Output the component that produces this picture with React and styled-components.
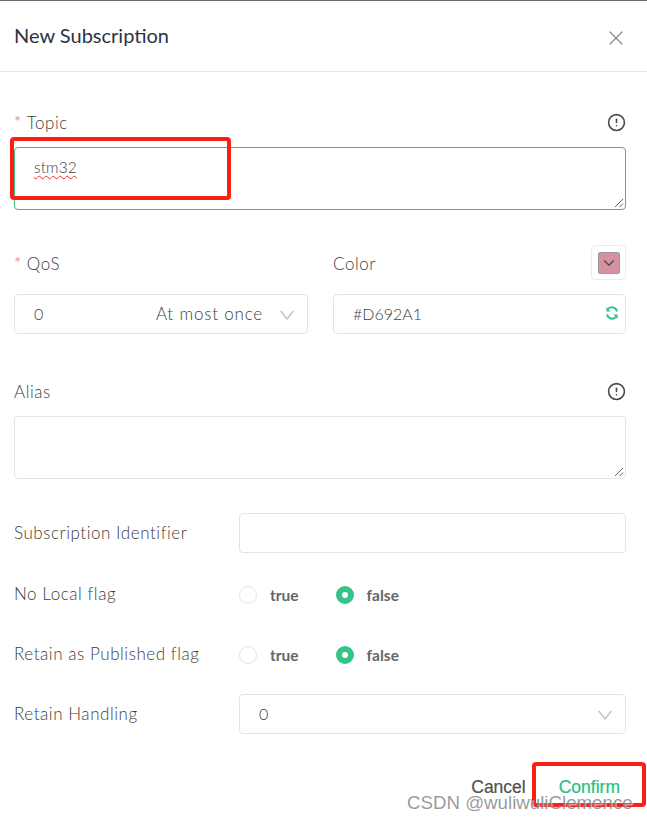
import React from 'react';
import styled, { createGlobalStyle } from 'styled-components';
import { X, ChevronDown, CircleAlert } from 'lucide-react';

const Global = createGlobalStyle`
  html, body { margin: 0; padding: 0; background: #fff; }
  * { box-sizing: border-box; }
`;
const Page = styled.div`
  position: relative; width: 647px; height: 820px; overflow: hidden; background: #fff;
  border-top: 1px solid #6f6f6f;
  font-family: Lato, "Liberation Sans", sans-serif; color: #5b5b5b;
`;
const Header = styled.header`
  height: 71px; padding: 0 19px 0 15px; display: flex; align-items: center; justify-content: space-between;
  border-bottom: 1px solid #e6e6ef;
`;
const Title = styled.h1`
  margin: 0 0 3px -1px; font-size: 20px; font-weight: 400; color: #2c3345;
`;
const CloseIcon = styled(X)`
  width: 24px; height: 24px; color: #85868c; margin-top: 3px;
`;
const Form = styled.div`
  padding: 40px 21px 0 14px; display: flex; flex-direction: column;
`;
const LabelRow = styled.div`
  display: flex; align-items: center; justify-content: space-between; height: 22px; padding: 0 0 2px;
`;
const Label = styled.label`
  font-size: 17px; font-weight: 300; letter-spacing: 0.55px; color: #404040; white-space: nowrap;
`;
const Star = styled.span`
  color: #f56c6c; font-size: 17px; margin-right: 5px;
`;
const Info = styled(CircleAlert)`
  width: 19px; height: 19px; color: #4a4a4a; stroke-width: 2;
`;
const TextBox = styled.div`
  position: relative; height: 63px; margin-top: 13px; padding: 10px 19px;
  border: 1px solid ${p => (p.$focus ? '#42b886' : '#e3e3f0')}; border-radius: 4px;
  font-size: 15.5px; font-weight: 300; letter-spacing: 0.1px; color: #404040;
`;
const Squiggle = styled.span`
  text-decoration: underline wavy #e8302a 1px; text-underline-offset: 2px;
`;
const Grip = styled.svg`
  position: absolute; right: 1px; bottom: 1px; width: 10px; height: 10px;
`;
const TwoCols = styled.div`
  display: grid; grid-template-columns: 294px 293px; column-gap: 25px; margin-top: 35px;
`;
const Col = styled.div`
  display: flex; flex-direction: column;
`;
const ColHead = styled.div`
  height: 35px; display: flex; align-items: center; justify-content: space-between;
  ${Label} { margin-top: 2px; }
`;
const Swatch = styled.div`
  width: 35px; height: 35px; border: 1px solid #eaeaf0; border-radius: 4px; display: flex; align-items: center; justify-content: center;
`;
const SwatchInner = styled.div`
  width: 22px; height: 22px; background: #d692a1; border: 1px solid #9a9a9a; border-radius: 2px;
  display: flex; align-items: center; justify-content: center; color: #4a4a4a;
`;
const Field = styled.div`
  height: 40px; border: 1px solid #e3e3f0; border-radius: 4px; display: flex; align-items: center; justify-content: space-between;
  padding: 0 ${p => p.$pr || 13}px 2px 19px; font-size: 16px; font-weight: 300; color: #404040;
  margin-top: ${p => p.$mt || 0}px;
  flex: ${p => (p.$grow ? 1 : 'none')};
`;
const Value = styled.span`
  flex: 1;
`;
const Hint = styled.span`
  margin-right: 17px; font-size: 17px; letter-spacing: 0.8px;
`;
const ChevronSvg = styled.svg`
  width: 14px; height: 10px; margin-top: 3px; flex: none;
`;
const AliasBlock = styled.div`
  margin-top: 47px;
`;
const Row = styled.div`
  display: flex; align-items: center; height: 40px; margin-top: ${p => p.$mt}px;
`;
const RowLabel = styled(Label)`
  width: 225px; flex: none; margin-bottom: ${p => p.$lift}px;
`;
const RadioGroup = styled.div`
  display: flex; align-items: center; gap: 37px;
`;
const RadioItem = styled.div`
  display: flex; align-items: center; gap: 13px; font-size: 15.5px; font-weight: 700; color: #666;
`;
const RadioDot = styled.span`
  width: 18px; height: 18px; border-radius: 50%; display: block;
  border: ${p => (p.$on ? '6px solid #34c388' : '1px solid #e3e3f0')}; background: #fff;
`;
const Footer = styled.div`
  display: flex; justify-content: flex-end; align-items: center; gap: 33px; margin-top: 43px; padding-right: 6px;
  font-family: "Liberation Sans", Arial, sans-serif; font-size: 17.5px; -webkit-text-stroke: 0.2px currentColor;
`;
const Cancel = styled.span`
  color: #505050;
`;
const Confirm = styled.span`
  color: #27bf83;
`;
const Annotation = styled.div`
  position: absolute; left: ${p => p.$x}px; top: ${p => p.$y}px; width: ${p => p.$w}px; height: ${p => p.$h}px;
  border: 4px solid #fb1f14; border-radius: 4px; pointer-events: none;
`;
const Watermark = styled.div`
  position: absolute; left: 407px; top: 791px; font-family: "Liberation Sans", Arial, sans-serif; font-size: 18.7px;
  color: rgba(120, 120, 120, 0.75); text-shadow: 1px 1px 1px rgba(255,255,255,0.7); white-space: nowrap;
`;

const ResizeGrip = () => (
  <Grip viewBox="0 0 10 10">
    <path d="M1 9 L9 1 M5.5 9 L9 5.5" stroke="#555" strokeWidth="0.9" fill="none" />
  </Grip>
);
const Chevron = () => (
  <ChevronSvg viewBox="0 0 14 10">
    <path d="M0.7 1 L7 9 L13.3 1" stroke="#c2c3c9" strokeWidth="1.4" fill="none" />
  </ChevronSvg>
);
const Refresh = () => (
  <svg width="14" height="14" viewBox="0 0 14 14" fill="none">
    <path d="M12 5.4 A5.2 5.2 0 0 0 3 3.2" stroke="#34c388" strokeWidth="2" />
    <path d="M2 8.6 A5.2 5.2 0 0 0 11 10.8" stroke="#34c388" strokeWidth="2" />
    <path d="M1.4 1 L1.4 5.4 L5.6 5.4 Z M12.6 13 L12.6 8.6 L8.4 8.6 Z" fill="#34c388" />
  </svg>
);
const Radio = ({ on, children }) => (
  <RadioItem><RadioDot $on={on} />{children}</RadioItem>
);

export default function App() {
  return (
    <Page>
      <Global />
      <Header>
        <Title>New Subscription</Title>
        <CloseIcon strokeWidth={1.2} />
      </Header>
      <Form>
        <LabelRow>
          <Label><Star>*</Star>Topic</Label>
          <Info />
        </LabelRow>
        <TextBox $focus><Squiggle>stm32</Squiggle><ResizeGrip /></TextBox>
        <TwoCols>
          <Col>
            <ColHead><Label><Star>*</Star>QoS</Label></ColHead>
            <Field $mt={14}>
              <Value>0</Value>
              <Hint>At most once</Hint>
              <Chevron />
            </Field>
          </Col>
          <Col>
            <ColHead>
              <Label>Color</Label>
              <Swatch><SwatchInner><ChevronDown size={18} strokeWidth={1.6} /></SwatchInner></Swatch>
            </ColHead>
            <Field $mt={14} $pr={6}>
              <Value>#D692A1</Value>
              <Refresh />
            </Field>
          </Col>
        </TwoCols>
        <AliasBlock>
          <LabelRow>
            <Label>Alias</Label>
            <Info />
          </LabelRow>
          <TextBox><ResizeGrip /></TextBox>
        </AliasBlock>
        <Row $mt={34}>
          <RowLabel $lift={2}>Subscription Identifier</RowLabel>
          <Field $grow />
        </Row>
        <Row $mt={22}>
          <RowLabel $lift={4}>No Local flag</RowLabel>
          <RadioGroup>
            <Radio>true</Radio>
            <Radio on>false</Radio>
          </RadioGroup>
        </Row>
        <Row $mt={20}>
          <RowLabel $lift={4}>Retain as Published flag</RowLabel>
          <RadioGroup>
            <Radio>true</Radio>
            <Radio on>false</Radio>
          </RadioGroup>
        </Row>
        <Row $mt={19}>
          <RowLabel $lift={2}>Retain Handling</RowLabel>
          <Field $grow>
            <Value>0</Value>
            <Chevron />
          </Field>
        </Row>
        <Footer>
          <Cancel>Cancel</Cancel>
          <Confirm>Confirm</Confirm>
        </Footer>
      </Form>
      <Annotation $x={10} $y={136} $w={221} $h={63} />
      <Annotation $x={532} $y={761} $w={114} $h={45} />
      <Watermark>CSDN @wuliwuliClemence</Watermark>
    </Page>
  );
}
